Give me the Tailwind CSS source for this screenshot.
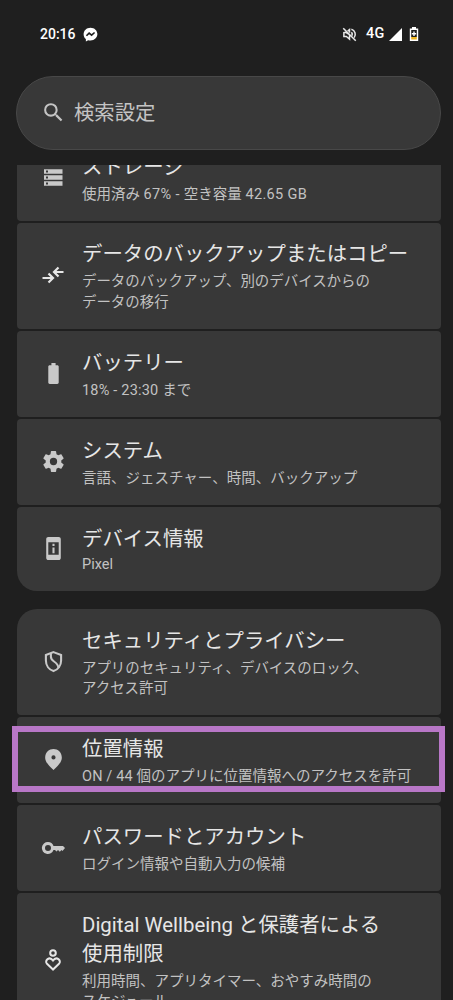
<!DOCTYPE html>
<html lang="ja">
<head>
<meta charset="utf-8">
<meta name="viewport" content="width=device-width, initial-scale=1">
<title>設定</title>
<script src="https://cdn.jsdelivr.net/npm/@tailwindcss/browser@4"></script>
</head>
<body class="relative flex h-[1000px] w-[453px] flex-col overflow-hidden bg-[#1f1f1f] font-['Roboto','Noto_Sans_CJK_JP',sans-serif] text-[#e6e6e6]">

<header class="flex h-[76px] shrink-0 items-start pt-[24px] pr-[34px] pl-[40px] text-white">
  <span class="h-5 w-[43px] text-[14px] leading-5 font-medium whitespace-nowrap">20:16</span>
  <svg class="mt-[3px] h-[15px] w-[15px]" viewBox="0 0 24 24"><path fill="#fff" d="M12 1C5.600 1 1 5.600 1 11.500c0 3.300 1.300 6 3.600 7.800V23l3.600-1.900c1.200.3 2.500.5 3.800.5 6.400 0 11-4.600 11-10.300S18.400 1 12 1z"/><path fill="none" stroke="#1f1f1f" stroke-width="2.600" d="M5.500 14l4.300-4.300 4 3.300 4.700-4.200"/></svg>
  <div class="ml-auto flex h-5 items-center">
    <svg class="mr-px h-[15px] w-[15px]" viewBox="0 0 24 24" fill="none" stroke="#e8e8e8" stroke-width="2.400"><path d="M2 2l20 20M3 9v6h4l5 4.500V12L6 8.500z"/><path d="M9 6.500l3-2.500v5M15 8.500c1.500 1.500 1.500 4 .5 5.500M15 3.500c6 1.500 8 9 4.500 13.500"/></svg>
    <span class="ml-[8px] w-[21px] text-[14.400px] leading-5 font-medium tracking-[0.200px]">4G</span>
    <svg class="ml-[2px] h-[13px] w-[13px]" viewBox="0 0 13 13"><path fill="#fff" d="M13 0v13H0z"/></svg>
    <svg class="ml-[7px] h-[14px] w-[10px]" viewBox="0 0 10 14"><path fill="#fff" d="M3 0h4v1.500h2.200V14H.8V1.500H3z"/><path fill="#1f1f1f" d="M2.200 3h5.600v7H2.200z"/><path fill="#efb51d" d="M2.200 10h5.600v2.500H2.200z"/><path fill="#fff" d="M4.300 4.500h1.400V6h1.500v1.400H5.700v1.500H4.300V7.400H2.800V6h1.500z"/></svg>
  </div>
</header>

<div class="ml-4 flex h-[74px] w-[425px] shrink-0 items-center rounded-full border border-[#484848] bg-[#383838] pl-[24px] text-[#c4c4c4]">
  <svg class="mb-px h-[25px] w-[25px]" viewBox="0 0 24 24" fill="currentColor"><path d="M15.500 14h-.79l-.28-.27A6.471 6.471 0 0 0 16 9.500 6.500 6.500 0 1 0 9.500 16c1.610 0 3.090-.59 4.230-1.570l.27.28v.79l5 4.990L20.490 19l-4.990-5zm-6 0C7.010 14 5 11.990 5 9.500S7.010 5 9.500 5 14 7.010 14 9.500 11.990 14 9.500 14z"/></svg>
  <span class="ml-2 text-[20.350px] leading-7">検索設定</span>
</div>

<main class="mt-[15px] min-h-0 flex-1 overflow-hidden pl-[16.500px]">
  <section class="-mt-[30px] flex w-[424.500px] flex-col gap-[2px]">
    <article class="flex h-[86px] rounded-[4px] bg-[#383838]">
      <div class="flex w-[65.500px] shrink-0 items-center pb-[2px] pl-[24px]">
        <svg class="h-[25px] w-6 text-[#c9c9c9]" viewBox="0 0 24 24" fill="currentColor"><path fill-rule="evenodd" d="M3 15.700h18.500v4.600H3zm2 1.300v2h2v-2zM3 3.700h18.500v4.600H3zM5 5v2h2V5zM3 9.700h18.500v4.600H3zM5 11v2h2v-2z"/></svg>
      </div>
      <div class="pt-[17.500px] whitespace-nowrap">
        <h2 class="text-[20.400px] leading-[29px]">ストレージ</h2>
        <p class="mt-[3px] text-[14.500px] leading-[20.500px] text-[#c2c2c2]">使用済み <span class="tracking-[0.350px]">67% - </span>空き容量 <span class="tracking-[0.350px]">42.65 GB</span></p>
      </div>
    </article>

    <article class="flex h-[106px] rounded-[4px] bg-[#383838]">
      <div class="flex w-[65.500px] shrink-0 items-center pb-[3px] pl-[24px]">
        <svg class="h-6 w-6" viewBox="0 0 24 24" fill="none" stroke="#e6e6e6" stroke-width="2.200"><path d="M1.500 15h10M7.500 10.500L12 15l-4.500 4.500M22.500 9h-10M17.500 4.500L13 9l4.500 4.500"/></svg>
      </div>
      <div class="pt-[17px] whitespace-nowrap">
        <h2 class="text-[20.400px] leading-[29px]">データのバックアップまたはコピー</h2>
        <p class="mt-[3px] text-[14.450px] leading-[20.500px] text-[#c2c2c2]">データのバックアップ、別のデバイスからの<br>データの移行</p>
      </div>
    </article>

    <article class="flex h-[86px] rounded-[4px] bg-[#383838]">
      <div class="flex w-[65.500px] shrink-0 items-center pb-[2px] pl-[24px]">
        <svg class="h-[25px] w-[25px] text-[#c9c9c9]" viewBox="0 0 24 24" fill="currentColor"><path d="M15.670 4H14V2h-4v2H8.330C7.600 4 7 4.600 7 5.330v15.330C7 21.400 7.600 22 8.330 22h7.330c.74 0 1.340-.6 1.340-1.330V5.330C17 4.600 16.400 4 15.670 4z"/></svg>
      </div>
      <div class="pt-[17.500px] whitespace-nowrap">
        <h2 class="text-[20.400px] leading-[29px]">バッテリー</h2>
        <p class="mt-[3px] text-[14.500px] leading-[20.500px] text-[#c2c2c2]"><span class="tracking-[0.200px]">18% - 23:30 </span>まで</p>
      </div>
    </article>

    <article class="flex h-[86px] rounded-[4px] bg-[#383838]">
      <div class="flex w-[65.500px] shrink-0 items-center pb-[2px] pl-[24px]">
        <svg class="h-[25px] w-[25px] text-[#c9c9c9]" viewBox="0 0 24 24" fill="currentColor"><path d="M19.500 12c0-.34-.03-.66-.07-.98l2.110-1.650c.19-.15.24-.42.12-.64l-2-3.460c-.12-.22-.39-.3-.61-.22l-2.490 1c-.52-.4-1.080-.73-1.690-.98l-.38-2.650A.488.488 0 0 0 14 2h-4c-.25 0-.46.18-.49.42l-.38 2.650c-.61.25-1.170.59-1.690.98l-2.490-1c-.23-.09-.49 0-.61.22l-2 3.460c-.13.22-.07.49.12.64l2.110 1.650c-.04.32-.07.65-.07.98s.03.66.07.98l-2.110 1.650c-.19.15-.24.42-.12.64l2 3.460c.12.22.39.3.61.22l2.490-1c.52.4 1.080.73 1.690.98l.38 2.650c.03.24.24.42.49.42h4c.25 0 .46-.18.49-.42l.38-2.650c.61-.25 1.170-.59 1.690-.98l2.490 1c.23.09.49 0 .61-.22l2-3.460c.12-.22.07-.49-.12-.64l-2.110-1.650c.04-.32.07-.64.07-.98zM12 15.500A3.500 3.500 0 1 1 12 8.500a3.500 3.500 0 0 1 0 7z"/></svg>
      </div>
      <div class="pt-[17.500px] whitespace-nowrap">
        <h2 class="text-[20.400px] leading-[29px]">システム</h2>
        <p class="mt-[3px] text-[14.500px] leading-[20.500px] text-[#c2c2c2]">言語、ジェスチャー、時間、バックアップ</p>
      </div>
    </article>

    <article class="flex h-[84px] rounded-t-[4px] rounded-b-[20px] bg-[#383838]">
      <div class="flex w-[65.500px] shrink-0 items-center pb-[2px] pl-[24px]">
        <svg class="h-[25px] w-[25px] text-[#c9c9c9]" viewBox="0 0 24 24" fill="currentColor"><path fill-rule="evenodd" d="M7 1h10c1.100 0 2 .9 2 2v18c0 1.100-.9 2-2 2H7c-1.100 0-2-.9-2-2V3c0-1.100.9-2 2-2zm0 5v12h10V6zm4 1.500h2v2h-2zm0 3.500h2v5.500h-2z"/></svg>
      </div>
      <div class="pt-[17.500px] whitespace-nowrap">
        <h2 class="text-[20.400px] leading-[29px]">デバイス情報</h2>
        <p class="mt-[1.500px] text-[14.500px] leading-[20.500px] text-[#c2c2c2]">Pixel</p>
      </div>
    </article>
  </section>

  <section class="mt-[18px] flex w-[424.500px] flex-col gap-[2px]">
    <article class="flex h-[106px] rounded-t-[20px] rounded-b-[4px] bg-[#383838]">
      <div class="flex w-[65.500px] shrink-0 items-center pb-[2px] pl-[24px]">
        <svg class="h-[25px] w-[25px]" viewBox="0 0 24 24" fill="none" stroke="#c9c9c9" stroke-width="2"><path d="M12 3l7.300 2.700V11c0 4.800-3 8.800-7.300 10.200C7.700 19.800 4.700 15.800 4.700 11V5.700z"/><path d="M9.500 4v3.500c0 2 .8 3 3 4.500 2.500 1.700 4.200 3 4.200 6.300"/></svg>
      </div>
      <div class="pt-[17.500px] whitespace-nowrap">
        <h2 class="text-[20.400px] leading-[29px]">セキュリティとプライバシー</h2>
        <p class="mt-[3px] text-[14.450px] leading-[20.500px] text-[#c2c2c2]">アプリのセキュリティ、デバイスのロック、<br>アクセス許可</p>
      </div>
    </article>

    <article class="flex h-[86px] rounded-[4px] bg-[#383838]">
      <div class="flex w-[65.500px] shrink-0 items-center pb-[2px] pl-[24px]">
        <svg class="h-[25px] w-[25px] text-[#c9c9c9]" viewBox="0 0 24 24" fill="currentColor"><path fill-rule="evenodd" d="M12 2c-4.200 0-8 3.220-8 8.200 0 3.320 2.670 7.250 8 11.800 5.330-4.550 8-8.480 8-11.800C20 5.220 16.200 2 12 2zm0 6a2 2 0 1 1 0 4 2 2 0 0 1 0-4z"/></svg>
      </div>
      <div class="pt-[17.500px] whitespace-nowrap">
        <h2 class="text-[20.400px] leading-[29px]">位置情報</h2>
        <p class="mt-[3px] text-[14.500px] leading-[20.500px] text-[#c2c2c2]"><span class="tracking-[0.150px]">ON / 44 </span>個のアプリに位置情報へのアクセスを許可</p>
      </div>
    </article>

    <article class="flex h-[86px] rounded-[4px] bg-[#383838]">
      <div class="flex w-[65.500px] shrink-0 items-center pb-px pl-[24px]">
        <svg class="h-6 w-6 text-[#c9c9c9]" viewBox="0 0 24 24" fill="currentColor"><path fill-rule="evenodd" d="M7 6a6 6 0 1 0 5.500 8H14l1.500 1.500L17 14l1.800 1.800L20.500 14l1 1L24 12l-2-2h-9.500A6 6 0 0 0 7 6zm0 3a3 3 0 1 1 0 6 3 3 0 0 1 0-6z"/></svg>
      </div>
      <div class="pt-[17.500px] whitespace-nowrap">
        <h2 class="text-[20.400px] leading-[29px]">パスワードとアカウント</h2>
        <p class="mt-[3px] text-[14.500px] leading-[20.500px] text-[#c2c2c2]">ログイン情報や自動入力の候補</p>
      </div>
    </article>

    <article class="flex h-[134px] rounded-[4px] bg-[#383838]">
      <div class="flex w-[65.500px] shrink-0 items-center pb-px pl-[24px]">
        <svg class="h-6 w-6" viewBox="0 0 24 24" fill="none" stroke="#e6e6e6" stroke-width="2"><circle cx="12" cy="5" r="2.800"/><path d="M12 21.500l-6-5.700c-3-3.300 2.500-8 6-3.300 3.500-4.700 9 0 6 3.300z"/></svg>
      </div>
      <div class="pt-[17.500px] whitespace-nowrap">
        <h2 class="text-[20.400px] leading-[29px]">Digital Wellbeing と保護者による<br>使用制限</h2>
        <p class="mt-[3px] text-[14.500px] leading-[20.500px] text-[#c2c2c2]">利用時間、アプリタイマー、おやすみ時間の<br>スケジュール</p>
      </div>
    </article>
  </section>
</main>

<div class="absolute top-[726px] left-[12px] h-[66px] w-[433px] border-[6px] border-[#b877c7]"></div>
</body>
</html>
